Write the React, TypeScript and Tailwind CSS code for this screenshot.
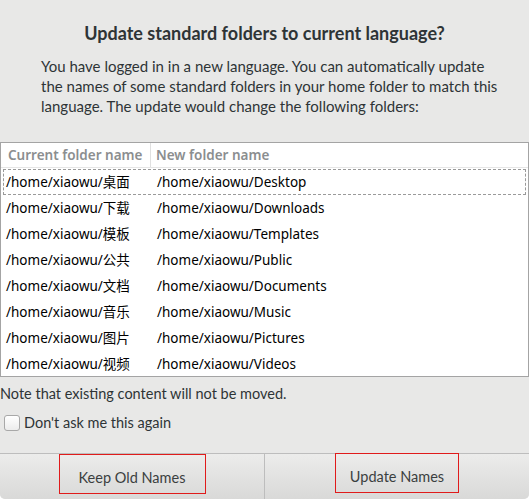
import React from 'react'

const ROWS: [string, string][] = [
  ['/home/xiaowu/桌面', '/home/xiaowu/Desktop'],
  ['/home/xiaowu/下载', '/home/xiaowu/Downloads'],
  ['/home/xiaowu/模板', '/home/xiaowu/Templates'],
  ['/home/xiaowu/公共', '/home/xiaowu/Public'],
  ['/home/xiaowu/文档', '/home/xiaowu/Documents'],
  ['/home/xiaowu/音乐', '/home/xiaowu/Music'],
  ['/home/xiaowu/图片', '/home/xiaowu/Pictures'],
  ['/home/xiaowu/视频', '/home/xiaowu/Videos'],
]

const ui = "font-['Lato','Noto_Sans_CJK_SC',sans-serif]"
const list = "font-['Noto_Sans','Noto_Sans_CJK_SC',sans-serif]"

export default function App() {
  return (
    <div className={`w-[529px] h-[499px] bg-[#e8e8e7] flex flex-col overflow-hidden rounded-b-[5px] ${ui} text-[#2e3436]`}>
      <div className="pt-[22px] text-center text-[18px] font-bold leading-[22px]">
        Update standard folders to current language?
      </div>
      <p className="mt-[12px] px-[41px] text-[15px] leading-[20px] whitespace-nowrap">
        You have logged in in a new language. You can automatically update
        <br />
        the names of some standard folders in your home folder to match this
        <br />
        language. The update would change the following folders:
      </p>

      <div className={`mt-[26px] h-[235px] bg-white border border-[#a4a4a4] ${list} text-[13.5px]`}>
        <div className="flex h-[25px] border-b border-[#e6e6e6] text-[#8b8e8f] font-semibold">
          <div className="w-[150px] pl-[7px] flex items-center border-r border-[#e0e0e0]">Current folder name</div>
          <div className="flex-1 pl-[5px] flex items-center">New folder name</div>
        </div>
        <div className="pt-[1px]">
          {ROWS.map(([cur, next], i) => (
            <div
              key={cur}
              className={`flex h-[26px] items-center text-black mx-[2px] ${i === 0 ? 'border border-dashed border-[#9a9a9a]' : 'border border-transparent'}`}
            >
              <div className="w-[150px] pl-[2px]">{cur}</div>
              <div className="flex-1 pl-[3px]">{next}</div>
            </div>
          ))}
        </div>
      </div>

      <div className="mt-[8px] text-[14.5px] leading-[18px]">Note that existing content will not be moved.</div>

      <label className="mt-[9px] ml-[4px] flex items-center gap-[4px] text-[14.5px]">
        <span className="w-[16px] h-[16px] rounded-[3px] border border-[#a8a8a8] bg-gradient-to-b from-white to-[#ececec]" />
        Don't ask me this again
      </label>

      <div className="mt-auto h-[46px] flex border-t border-[#bdbdbd] bg-gradient-to-b from-[#ececeb] to-[#d9d9d8]">
        <div className="w-[265px] flex justify-center border-r border-[#bdbdbd]">
          <span className="flex items-center justify-center w-[147px] h-[40px] border border-[#e01b1b] pt-[7px] text-[14.5px] text-[#3b3f40]">
            Keep Old Names
          </span>
        </div>
        <div className="flex-1 flex justify-center">
          <span className="-mt-[1px] flex items-center justify-center w-[124px] h-[40px] border border-[#e01b1b] pt-[7px] text-[14.5px] text-[#3b3f40]">
            Update Names
          </span>
        </div>
      </div>
    </div>
  )
}
